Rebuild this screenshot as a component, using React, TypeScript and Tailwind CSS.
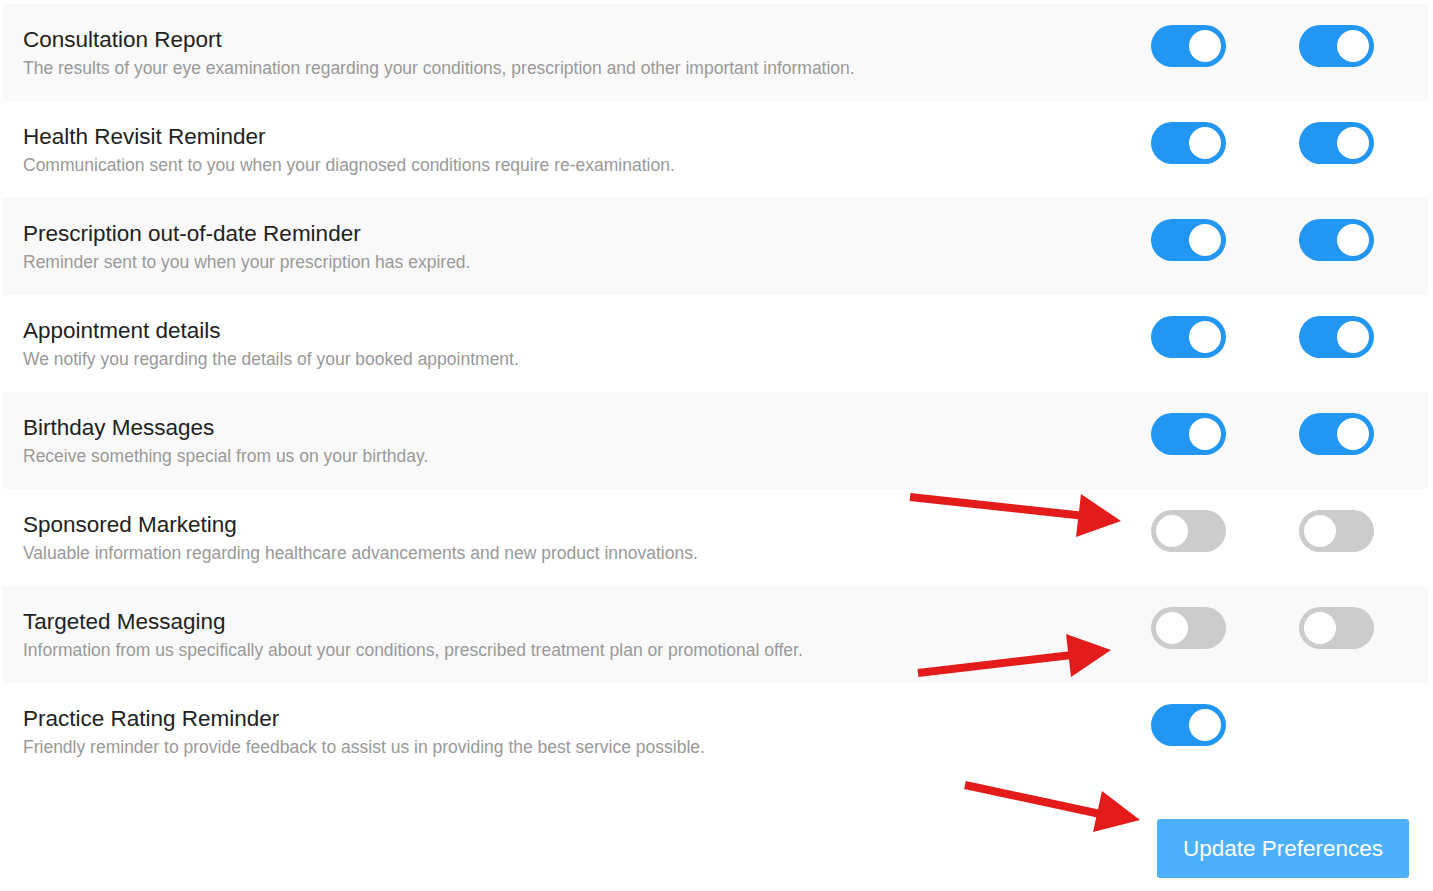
import React from "react";

type Row = { title: string; desc: string; a: boolean; b: boolean | null };

const rows: Row[] = [
  { title: "Consultation Report", desc: "The results of your eye examination regarding your conditions, prescription and other important information.", a: true, b: true },
  { title: "Health Revisit Reminder", desc: "Communication sent to you when your diagnosed conditions require re-examination.", a: true, b: true },
  { title: "Prescription out-of-date Reminder", desc: "Reminder sent to you when your prescription has expired.", a: true, b: true },
  { title: "Appointment details", desc: "We notify you regarding the details of your booked appointment.", a: true, b: true },
  { title: "Birthday Messages", desc: "Receive something special from us on your birthday.", a: true, b: true },
  { title: "Sponsored Marketing", desc: "Valuable information regarding healthcare advancements and new product innovations.", a: false, b: false },
  { title: "Targeted Messaging", desc: "Information from us specifically about your conditions, prescribed treatment plan or promotional offer.", a: false, b: false },
  { title: "Practice Rating Reminder", desc: "Friendly reminder to provide feedback to assist us in providing the best service possible.", a: true, b: null },
];

function Toggle({ on }: { on: boolean }) {
  return (
    <div
      className={
        "w-[75px] h-[42px] rounded-full flex items-center px-[5px] " +
        (on ? "bg-[#2196f3] justify-end" : "bg-[#cccccc] justify-start")
      }
    >
      <div className="w-[32px] h-[32px] rounded-full bg-white" />
    </div>
  );
}

export default function App() {
  return (
    <div
      className="relative w-[1433px] h-[891px] bg-white overflow-hidden"
      style={{ fontFamily: '"Liberation Sans", Arial, sans-serif' }}
    >
      <div className="pt-[4px] pl-[3px] w-[1428px]">
        {rows.map((r, i) => (
          <div
            key={r.title}
            className={"h-[97px] flex " + (i % 2 === 0 ? "bg-[#f9f9f9]" : "bg-white")}
          >
            <div className="flex-1 pl-[20px] pt-[22px]">
              <div className="text-[22.5px] leading-[28px] text-[#222222]">{r.title}</div>
              <div className="text-[17.5px] leading-[20px] mt-[4px] text-[#999999]">{r.desc}</div>
            </div>
            <div className="flex gap-[73px] pt-[21px] pr-[54px]">
              <Toggle on={r.a} />
              {r.b === null ? <div className="w-[75px]" /> : <Toggle on={r.b} />}
            </div>
          </div>
        ))}
        <div className="flex justify-end pr-[19px] pt-[39px]">
          <button className="w-[252px] h-[59px] rounded-[3px] bg-[#4db0fd] text-white text-[22.5px] leading-[28px]">
            Update Preferences
          </button>
        </div>
      </div>
      <svg className="absolute inset-0 pointer-events-none" width="1433" height="891" viewBox="0 0 1433 891">
        <g fill="#e31b1b" stroke="#e31b1b">
          <line x1="910" y1="497" x2="1085" y2="516" strokeWidth="8" />
          <polygon points="1081,494 1121,521 1076,537" stroke="none" />
          <line x1="918" y1="673" x2="1072" y2="655" strokeWidth="8" />
          <polygon points="1066,634 1111,650 1071,677" stroke="none" />
          <line x1="965" y1="785" x2="1105" y2="815" strokeWidth="8" />
          <polygon points="1102,791 1140,820 1093,832" stroke="none" />
        </g>
      </svg>
    </div>
  );
}
